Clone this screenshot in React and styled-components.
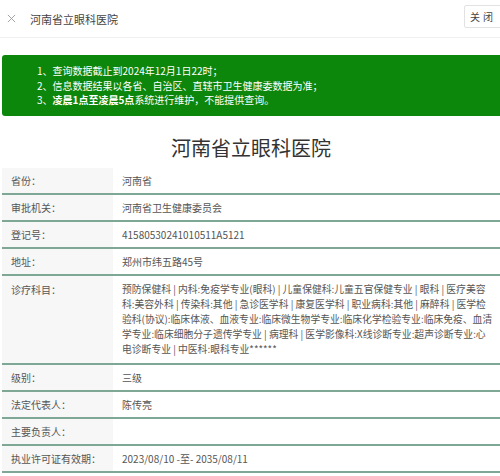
import styled, { createGlobalStyle } from "styled-components"

const GlobalStyle = createGlobalStyle`
* {
  margin: 0;
  padding: 0;
  box-sizing: border-box;
}
body {
  background: #fff;
  font-family: "Noto Sans CJK SC", "Noto Sans", sans-serif;
  color: #555;
  overflow: hidden;
}
`

const Header = styled.div`
  height: 38px;
  display: flex;
  align-items: center;
  border-bottom: 1px solid #f0f0f0;
  padding-left: 7px;
`

const CloseX = styled.svg`
  width: 9px;
  height: 9px;
  margin-right: 14px;
`

const HeaderTitle = styled.div`
  font-size: 11px;
  color: #444;
  flex: 1;
`

const CloseButton = styled.button`
  height: 23px;
  width: 44px;
  margin-right: -8px;
  align-self: flex-start;
  margin-top: 5px;
  background: #fff;
  border: 1px solid #e2e2e2;
  border-radius: 2px;
  font-family: inherit;
  font-size: 10px;
  color: #444;
  text-align: left;
  padding-left: 5px;
  letter-spacing: 3px;
`

const Body = styled.div`
  padding-left: 2px;
`

const Notice = styled.div`
  margin-top: 17px;
  margin-right: -10px;
  height: 61px;
  background: #0c870c;
  border-radius: 3px;
  padding: 9px 0 0 35px;
  color: #fff;
  font-size: 10px;
  line-height: 14.5px;
`

const NoticeLine = styled.div``

const Bold = styled.b`
  font-weight: 700;
`

const Title = styled.h1`
  text-align: center;
  font-size: 20px;
  font-weight: 400;
  color: #333;
  line-height: 28px;
  margin: 18px 0 6px;
`

const Table = styled.div`
  display: flex;
  flex-direction: column;
`

const Row = styled.div`
  display: flex;
  border-bottom: 2px solid #7fa795;
  min-height: 27px;
`

const Label = styled.div`
  width: 111px;
  flex-shrink: 0;
  background: #f7f7f7;
  padding: ${p => (p.$top ? "6px 0 0 9px" : "0 0 0 9px")};
  display: flex;
  align-items: ${p => (p.$top ? "flex-start" : "center")};
  font-size: 10px;
  line-height: 15px;
  color: #555;
`

const Value = styled.div`
  flex: 1;
  padding: ${p => (p.$top ? "6px 4px 6px 9px" : "0 4px 0 9px")};
  display: ${p => (p.$top ? "block" : "flex")};
  align-items: center;
  font-size: ${p => (p.$top ? "9.8px" : "10px")};
  line-height: 15px;
  color: #555;
`

const subjects = [
  "预防保健科 | 内科:免疫学专业(眼科) | 儿童保健科:儿童五官保健专业 | 眼科 | 医疗美容",
  "科:美容外科 | 传染科:其他 | 急诊医学科 | 康复医学科 | 职业病科:其他 | 麻醉科 | 医学检",
  "验科(协议):临床体液、血液专业:临床微生物学专业:临床化学检验专业:临床免疫、血清",
  "学专业:临床细胞分子遗传学专业 | 病理科 | 医学影像科:X线诊断专业:超声诊断专业:心",
  "电诊断专业 | 中医科:眼科专业******",
]

const rows = [
  ["省份：", "河南省"],
  ["审批机关：", "河南省卫生健康委员会"],
  ["登记号：", "41580530241010511A5121"],
  ["地址：", "郑州市纬五路45号"],
  [
    "诊疗科目：",
    subjects.map((l, i) => (
      <span key={i}>
        {l}
        {i < subjects.length - 1 && <br />}
      </span>
    )),
    true,
  ],
  ["级别：", "三级"],
  ["法定代表人：", "陈传亮"],
  ["主要负责人：", ""],
  ["执业许可证有效期：", "2023/08/10 -至- 2035/08/11"],
]

const App = () => {
  return (
    <>
      <GlobalStyle />
      <Header>
        <CloseX viewBox="0 0 10 10">
          <path d="M1 1L9 9M9 1L1 9" stroke="#999" strokeWidth="1" />
        </CloseX>
        <HeaderTitle>河南省立眼科医院</HeaderTitle>
        <CloseButton>关闭</CloseButton>
      </Header>
      <Body>
        <Notice>
          <NoticeLine>1、查询数据截止到2024年12月1日22时；</NoticeLine>
          <NoticeLine>2、信息数据结果以各省、自治区、直辖市卫生健康委数据为准；</NoticeLine>
          <NoticeLine>
            3、<Bold>凌晨1点至凌晨5点</Bold>系统进行维护，不能提供查询。
          </NoticeLine>
        </Notice>
        <Title>河南省立眼科医院</Title>
        <Table>
          {rows.map(([k, v, top]) => (
            <Row key={k}>
              <Label $top={top}>{k}</Label>
              <Value $top={top}>{v}</Value>
            </Row>
          ))}
        </Table>
      </Body>
    </>
  )
}

export default App
